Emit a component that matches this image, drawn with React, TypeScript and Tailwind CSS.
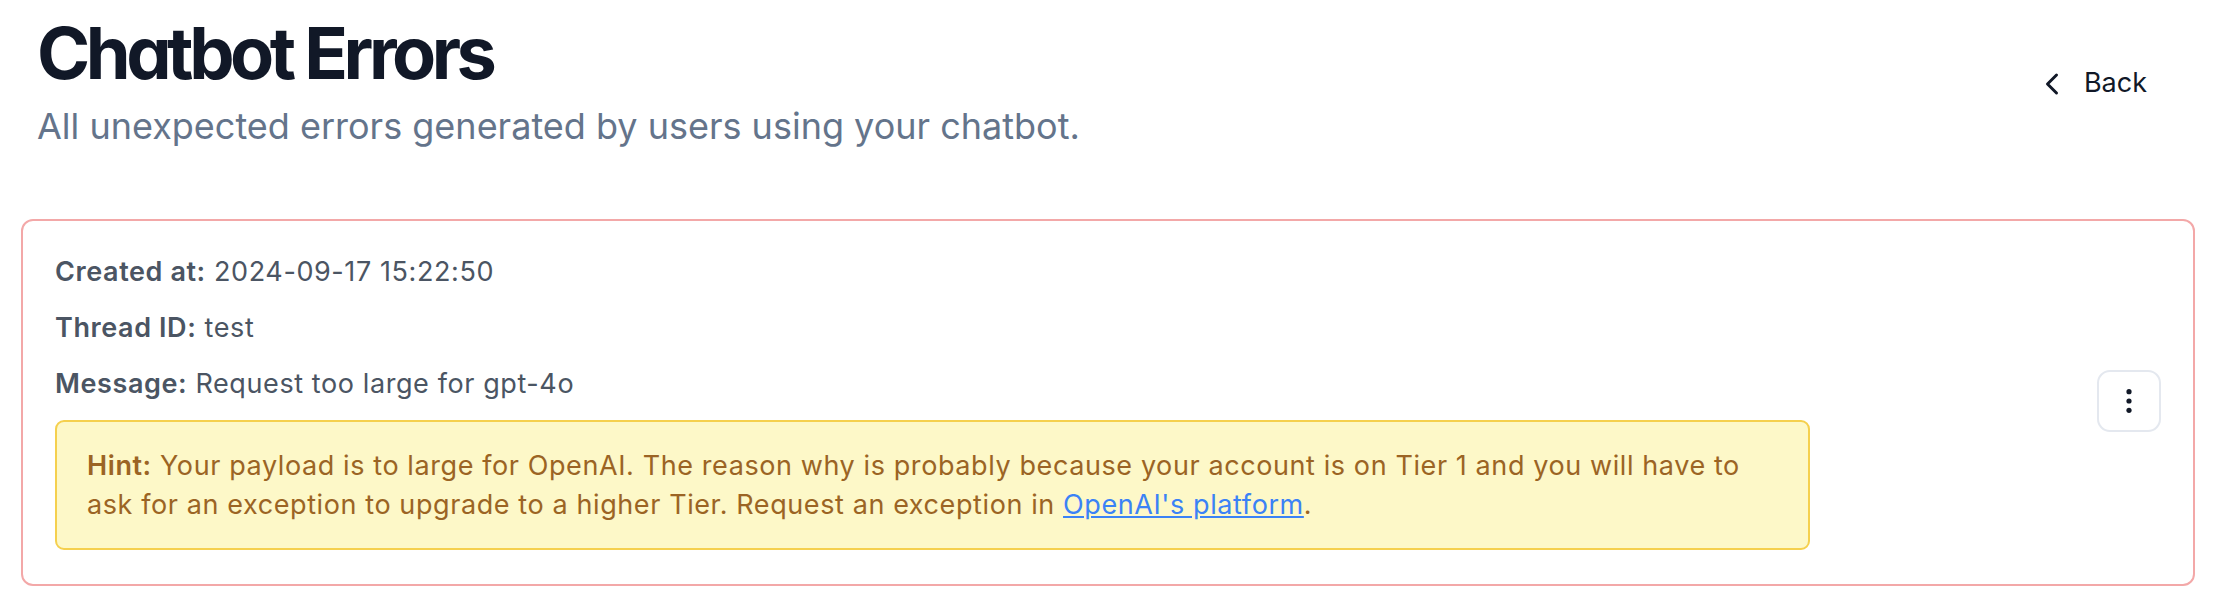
import React from "react";
import { ChevronLeft } from "lucide-react";

export default function App() {
  return (
    <div className="min-h-screen bg-white pl-[21px] pr-[33px] pt-[17px] [font-family:Inter,sans-serif]">
      <header className="flex items-center justify-between px-[16px]">
        <div>
          <h1 className="text-[72px] leading-[72px] font-bold tracking-[-0.062em] text-[#111827] [font-feature-settings:'cv11']">
            Chatbot Errors
          </h1>
          <p className="mt-[13px] text-[36px] leading-[48px] text-[#64748b]">
            All unexpected errors generated by users using your chatbot.
          </p>
        </div>
        <button className="flex items-center gap-[14px] pr-[32px] text-[27px] text-[#111827]">
          <ChevronLeft size={36} strokeWidth={2} />
          Back
        </button>
      </header>

      <div className="mt-[69px] flex items-center justify-between rounded-[12px] border-2 border-[#f3a8a8] px-[32px] pt-[31px] pb-[34px]">
        <div className="flex w-5/6 flex-col gap-[17px] text-[27px] leading-[39px] tracking-[0.022em] text-[#4b5563]">
          <p>
            <span className="font-semibold">Created at:</span> 2024-09-17 15:22:50
          </p>
          <p>
            <span className="font-semibold">Thread ID:</span> test
          </p>
          <p>
            <span className="font-semibold">Message:</span> Request too large for gpt-4o
          </p>
          <div className="rounded-[9px] border-2 border-[#f5d04e] bg-[#fdf8c8] px-[30px] py-[24px] text-[#9b6424]">
            <span className="font-semibold">Hint:</span> Your payload is to large for OpenAI. The reason why is probably
            because your account is on Tier 1 and you will have to ask for an exception to upgrade to a higher Tier.
            Request an exception in{" "}
            <a href="#" className="text-[#3b82f6] underline">
              OpenAI's platform
            </a>
            .
          </div>
        </div>
        <button className="flex h-[62px] w-[64px] items-center justify-center rounded-[13px] border-2 border-[#e4e8ef] bg-white">
          <svg width="8" height="26" viewBox="0 0 8 26" fill="#111827">
            <circle cx="4" cy="3.7" r="2.6" />
            <circle cx="4" cy="13" r="2.6" />
            <circle cx="4" cy="22.3" r="2.6" />
          </svg>
        </button>
      </div>
    </div>
  );
}
